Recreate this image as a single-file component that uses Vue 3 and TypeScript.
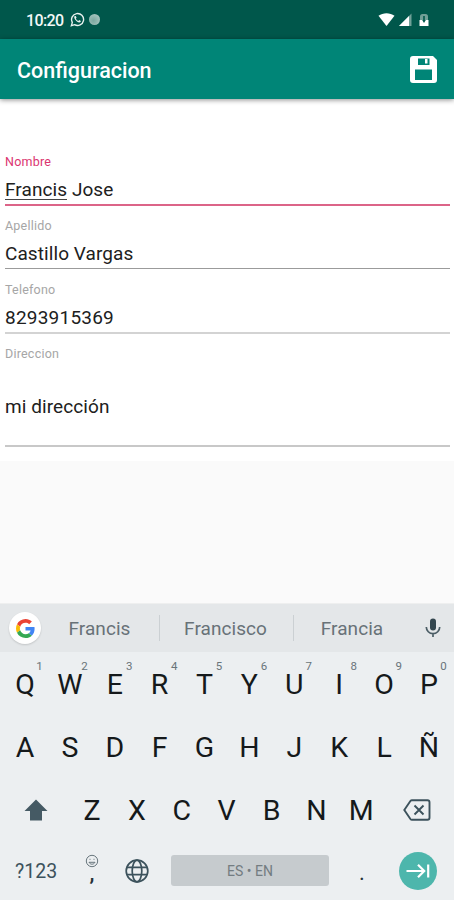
<script setup lang="ts">
interface Field {
  label: string
  marked?: string
  value: string
  kind: string
}

const fields: Field[] = [
  { label: 'Nombre', marked: 'Francis', value: ' Jose', kind: 'active' },
  { label: 'Apellido', value: 'Castillo Vargas', kind: 'thin' },
  { label: 'Telefono', value: '8293915369', kind: 'soft' },
  { label: 'Direccion', value: 'mi dirección', kind: 'tall' },
]
const topRow: string[] = [...'QWERTYUIOP']
const homeRow: string[] = [...'ASDFGHJKLÑ']
const lowRow: string[] = [...'ZXCVBNM']
</script>

<template>
  <div class="screen">
    <header class="status">
      <span class="clock">10:20</span>
      <svg class="whatsapp" viewBox="0 0 24 24" fill="none" stroke="#e9f2f0">
        <path d="M2.2 21.8l1.5-5.2a9.6 9.6 0 1 1 3.6 3.7z" stroke-width="2.2" />
        <path d="M7.500 6.500c-1.200 1.200-1 3.200.9 5.700 1.900 2.600 4.600 4.500 6.500 4.400 1.300-.1 2.400-.9 2.500-2.300l-2.700-1.500-1.400 1.500c-1.900-.7-3.200-1.900-4-3.800l1.200-1.200L9.200 6.300z" fill="#e9f2f0" stroke="none" />
      </svg>
      <span class="bubble"></span>
      <svg class="signals" viewBox="0 0 52 16">
        <path d="M0.500 3.700C5 .3 12 .3 16.500 3.700L8.500 14z" fill="#fff" />
        <path d="M33.500 1.500V14H21z" fill="#6fa198" />
        <path d="M31 4V14H21z" fill="#fff" />
        <path d="M42 8V4.500a2.500 2.500 0 0 1 2.500-2.500h3a2.500 2.500 0 0 1 2.500 2.500V8z" fill="#719f97" />
        <path d="M41.500 8h9v6h-9z" fill="#fff" />
        <path d="M45.200 4h1.600v4h1L46 11l-1.800-3h1z" fill="#00574b" />
      </svg>
    </header>

    <div class="appbar">
      <h1>Configuracion</h1>
      <svg class="save" viewBox="0 0 27 27">
        <path fill="#fff" fill-rule="evenodd" d="M3 0H23L27 4V24a3 3 0 0 1-3 3H3a3 3 0 0 1-3-3V3a3 3 0 0 1 3-3zM8 2.500V9H19.500V2.500zM5 13.500V24H22V13.500z" />
        <rect x="15" y="3" width="2.500" height="4.500" fill="#fff" />
      </svg>
    </div>

    <main class="form">
      <div v-for="f in fields" :key="f.label" class="field" :class="f.kind">
        <label>{{ f.label }}</label>
        <div class="value"><span v-if="f.marked" class="marked">{{ f.marked }}</span>{{ f.value }}</div>
      </div>
    </main>
    <div class="blank"></div>

    <section class="keyboard">
      <div class="suggestions">
        <span class="google">
          <svg viewBox="0 0 48 48">
            <path fill="#EA4335" d="M24 9.500c3.540 0 6.710 1.220 9.210 3.600l6.850-6.850C35.900 2.380 30.470 0 24 0 14.620 0 6.510 5.380 2.560 13.220l7.980 6.190C12.430 13.720 17.740 9.500 24 9.500z" />
            <path fill="#4285F4" d="M46.980 24.550c0-1.570-.15-3.090-.38-4.550H24v9.020h12.940c-.58 2.960-2.260 5.480-4.780 7.180l7.730 6c4.510-4.180 7.090-10.360 7.090-17.650z" />
            <path fill="#FBBC05" d="M10.530 28.590c-.48-1.450-.76-2.990-.76-4.590s.27-3.140.76-4.590l-7.980-6.190C.92 16.460 0 20.120 0 24c0 3.880.92 7.540 2.560 10.780z" />
            <path fill="#34A853" d="M24 48c6.480 0 11.930-2.130 15.890-5.810l-7.730-6c-2.150 1.450-4.920 2.300-8.160 2.300-6.260 0-11.570-4.220-13.470-9.910l-7.980 6.190C6.510 42.620 14.620 48 24 48z" />
          </svg>
        </span>
        <span class="word first">Francis</span>
        <span class="word second">Francisco</span>
        <span class="word third">Francia</span>
        <svg class="mic" viewBox="0 0 16 20">
          <rect x="5" y="0.500" width="6" height="12" rx="3" fill="#34474f" />
          <path d="M1.300 9a6.700 6.700 0 0 0 13.400 0M8 15.500V19" fill="none" stroke="#4b5d65" stroke-width="1.700" />
        </svg>
      </div>

      <div class="row">
        <span v-for="(k, i) in topRow" :key="k" class="key">{{ k }}<sup>{{ (i + 1) % 10 }}</sup></span>
      </div>
      <div class="row">
        <span v-for="k in homeRow" :key="k" class="key">{{ k }}</span>
      </div>
      <div class="row low">
        <span class="key">
          <svg class="shift" viewBox="0 0 24 22"><path d="M12 0.500L23.500 12H18v9.500H6V12H.5z" fill="#455a64" /></svg>
        </span>
        <span v-for="k in lowRow" :key="k" class="key">{{ k }}</span>
        <span class="key">
          <svg class="erase" viewBox="0 0 28 22" fill="none" stroke="#3c525c" stroke-width="1.900">
            <path d="M9 1.200H24.500a2 2 0 0 1 2 2V18.800a2 2 0 0 1-2 2H9a2 2 0 0 1-1.600-.8L1.300 11l6.100-9a2 2 0 0 1 1.600-.8z" />
            <path d="M11.500 6.500l9 9M20.500 6.500l-9 9" />
          </svg>
        </span>
      </div>
      <div class="bottom">
        <span class="mode">?123</span>
        <span class="comma">
          <svg viewBox="0 0 14 14" fill="none" stroke="#68767d">
            <circle cx="7" cy="7" r="5.700" />
            <path d="M4 8.300c1.200 2.500 4.800 2.500 6 0zM4.500 5.300h1M8.500 5.300h1" />
          </svg>
          <b>,</b>
        </span>
        <svg class="globe" viewBox="0 0 24 24" fill="none" stroke="#3c525c" stroke-width="1.700">
          <circle cx="12" cy="12" r="10.800" />
          <ellipse cx="12" cy="12" rx="4.800" ry="10.800" />
          <path d="M2 8.300H22M2 15.700H22" />
        </svg>
        <span class="space">ES • EN</span>
        <span class="dot">.</span>
        <span class="enter">
          <svg viewBox="0 0 24 16" fill="none" stroke="#fff" stroke-width="2.200"><path d="M0.500 8H18M12 1.800L18.200 8 12 14.200M22.200 1.500v13" /></svg>
        </span>
      </div>
    </section>
  </div>
</template>

<style>
body {
  margin: 0;
  background: #fafafa;
}
</style>

<style scoped>
.screen {
  display: flex;
  flex-direction: column;
  width: 454px;
  height: 900px;
  overflow: hidden;
  font-family: Roboto, sans-serif;
  background: #fafafa;
}
svg {
  display: block;
  flex: none;
}
.status {
  box-sizing: border-box;
  flex: none;
  display: flex;
  align-items: center;
  height: 39px;
  padding: 2px 0 0 26px;
  background: #00574b;
}
.clock {
  width: 44px;
  font-size: 16px;
  font-weight: 500;
  letter-spacing: -0.6px;
  color: #f2f8f7;
}
.whatsapp {
  width: 15px;
  height: 15px;
  margin-bottom: 2px;
}
.bubble {
  width: 11px;
  height: 11px;
  margin: 0 0 2px 3.5px;
  border-radius: 50%;
  background: radial-gradient(circle at 40% 60%, #7ba8a0, #b4cdc8);
}
.signals {
  width: 52px;
  height: 16px;
  margin: 0 0 1px 278.5px;
}
.appbar {
  box-sizing: border-box;
  position: relative;
  flex: none;
  display: flex;
  align-items: center;
  justify-content: space-between;
  height: 60px;
  padding: 1px 17px 0;
  background: #008577;
  box-shadow: 0 1px 5px rgba(0, 0, 0, 0.45);
}
h1 {
  margin: 2px 0 0;
  font-size: 21.5px;
  font-weight: 500;
  color: #fff;
}
.save {
  width: 27px;
  height: 27px;
}
.form {
  box-sizing: border-box;
  flex: none;
  height: 362px;
  padding: 54px 4px 0 5px;
  background: #fff;
}
.field {
  box-sizing: border-box;
  display: flex;
  flex-direction: column;
  height: 64px;
}
label {
  flex: none;
  height: 17px;
  line-height: 17px;
  font-size: 12.5px;
  letter-spacing: 0.22px;
  color: #a6a6a6;
}
.value {
  box-sizing: border-box;
  flex: none;
  height: 35px;
  padding-top: 8px;
  line-height: 24px;
  font-size: 19px;
  letter-spacing: 0.08px;
  color: #202020;
  border-bottom: 1px solid #9b9b9b;
}
.active label {
  color: #db3570;
}
.active .value {
  height: 36px;
  border-bottom: 2px solid #dc6488;
}
.marked {
  display: inline-block;
  height: 21px;
  border-bottom: 1px solid #444;
}
.soft .value {
  height: 36px;
  letter-spacing: 0.22px;
  border-bottom: 2px solid #d3d3d3;
}
.tall .value {
  height: 85px;
  padding-top: 33px;
  border-bottom: 2px solid #c8c8c8;
}
.blank {
  flex: none;
  height: 142px;
}
.keyboard {
  height: 297px;
  background: #eceff1;
}
.suggestions {
  box-sizing: border-box;
  display: flex;
  align-items: center;
  height: 49px;
  padding: 0 0 0 9px;
  border-top: 1px solid #eeefef;
  background: #e4e7e9;
}
.google {
  display: flex;
  align-items: center;
  justify-content: center;
  flex: none;
  width: 32px;
  height: 32px;
  border-radius: 50%;
  background: #fff;
  box-shadow: 0 1px 2px rgba(0, 0, 0, 0.15);
}
.google svg {
  width: 19px;
  height: 19px;
}
.word {
  box-sizing: border-box;
  flex: none;
  height: 26px;
  line-height: 28px;
  font-size: 19px;
  letter-spacing: 0.05px;
  color: #687278;
  text-align: center;
}
.first {
  width: 119px;
  padding-right: 1px;
  border-right: 1px solid #cbd0d3;
}
.second {
  width: 134px;
  padding-right: 2px;
  border-right: 1px solid #cbd0d3;
}
.third {
  width: 116px;
}
.mic {
  width: 16px;
  height: 20px;
  margin: 0 0 1px 15px;
}
.row {
  display: grid;
  grid-template-columns: repeat(10, 44.9px);
  height: 63px;
  padding-left: 2.5px;
}
.row.low {
  grid-template-columns: 67px repeat(7, 44.9px) 67px;
}
.key {
  position: relative;
  display: flex;
  align-items: center;
  justify-content: center;
  padding-top: 2px;
  font-size: 28.5px;
  color: #15191b;
}
.key sup {
  position: absolute;
  top: 7px;
  left: 32px;
  width: 10px;
  line-height: 14px;
  font-size: 11.5px;
  color: #69747a;
  text-align: center;
}
.shift {
  width: 24px;
  height: 22px;
  margin-bottom: 2px;
}
.erase {
  width: 28px;
  height: 22px;
  margin-bottom: 1px;
}
.bottom {
  display: flex;
  align-items: center;
  height: 59px;
}
.mode {
  width: 69px;
  padding: 2px 0 0 15px;
  font-size: 19.5px;
  color: #3c525c;
}
.comma {
  display: flex;
  flex-direction: column;
  align-items: center;
  width: 16px;
}
.comma svg {
  width: 14px;
  height: 14px;
}
.comma b {
  height: 20px;
  line-height: 12px;
  font-size: 22px;
  font-weight: 500;
  color: #263238;
}
.globe {
  width: 24px;
  height: 24px;
  margin-left: 25px;
}
.space {
  width: 158px;
  height: 31px;
  margin-left: 22px;
  border-radius: 3px;
  line-height: 32px;
  font-size: 14px;
  color: #737c81;
  background: #c6cbce;
  text-align: center;
}
.dot {
  width: 66px;
  padding: 4px 4px 0 0;
  font-size: 22px;
  color: #263238;
  text-align: center;
}
.enter {
  display: flex;
  align-items: center;
  justify-content: center;
  flex: none;
  width: 38px;
  height: 38px;
  border-radius: 50%;
  background: #4db6ac;
}
.enter svg {
  width: 24px;
  height: 16px;
}
</style>
